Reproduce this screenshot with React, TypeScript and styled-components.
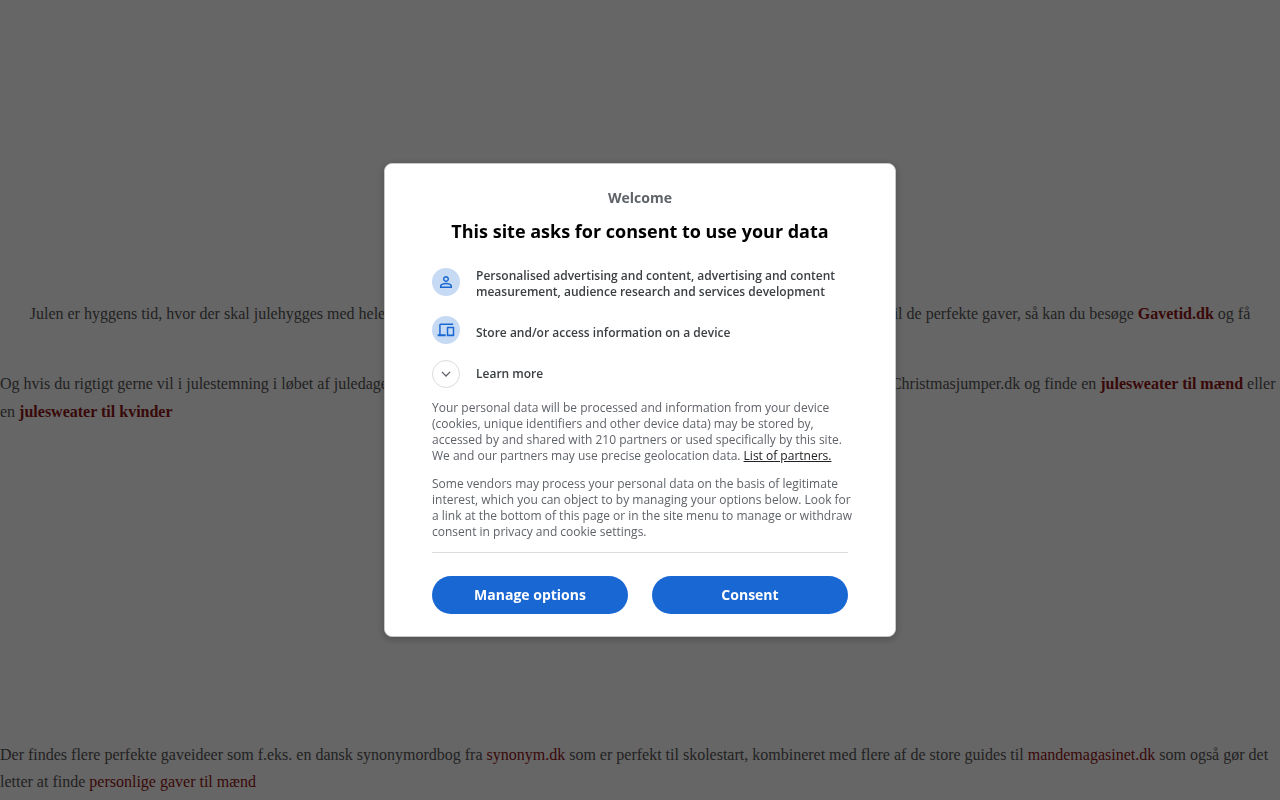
import React from "react";
import styled, { createGlobalStyle } from "styled-components";

const GlobalStyle = createGlobalStyle`
  *, *::before, *::after { box-sizing: border-box; }
  body {
    margin: 0;
    background: #fff;
    color: #555;
    font-family: "Liberation Serif", "Times New Roman", serif;
    font-size: 16px;
    overflow: hidden;
  }
`;

const Page = styled.main`
  padding-top: 300px;
`;

const Paragraph = styled.p<{ $center?: boolean; $leading?: number; $after?: number }>`
  margin: 0 0 ${(p) => p.$after ?? 0}px;
  line-height: ${(p) => p.$leading ?? 28}px;
  text-align: ${(p) => (p.$center ? "center" : "left")};
`;

const TextGap = styled.span<{ $width: number }>`
  display: inline-block;
  width: ${(p) => p.$width}px;
`;

const PageLink = styled.a<{ $bold?: boolean }>`
  color: #901414;
  font-weight: ${(p) => (p.$bold ? 700 : 400)};
  text-decoration: none;
`;

const Overlay = styled.div`
  position: fixed;
  inset: 0;
  display: flex;
  align-items: center;
  justify-content: center;
  background: rgba(0, 0, 0, 0.6);
`;

const Dialog = styled.section`
  width: 100%;
  max-width: 512px;
  padding: 24px 47px 22px;
  border: 1px solid #c8c8c8;
  border-radius: 8px;
  background: #fff;
  box-shadow: 0 2px 8px rgba(0, 0, 0, 0.25);
  color: #5f6368;
  font-family: "Open Sans", sans-serif;
  font-size: 12px;
  line-height: 16px;
`;

const Welcome = styled.p`
  margin: 0 0 12px;
  font-size: 14px;
  font-weight: 700;
  line-height: 20px;
  text-align: center;
`;

const Title = styled.h1`
  margin: 0 0 26px;
  color: #000;
  font-size: 18px;
  font-weight: 700;
  line-height: 22px;
  text-align: center;
`;

const Purposes = styled.ul`
  display: flex;
  flex-direction: column;
  gap: 16px;
  margin: 0 0 16px;
  padding: 0;
  list-style: none;
`;

const Purpose = styled.li`
  display: flex;
  gap: 16px;
  color: #3c4043;
  font-weight: 600;
`;

const PurposeText = styled.span<{ $single?: boolean }>`
  padding-top: ${(p) => (p.$single ? 9 : 0)}px;
`;

const IconDisc = styled.span<{ $outlined?: boolean }>`
  display: flex;
  flex: none;
  align-items: center;
  justify-content: center;
  width: 28px;
  height: 28px;
  border: ${(p) => (p.$outlined ? "1px solid #dadce0" : "0")};
  border-radius: 50%;
  background: ${(p) => (p.$outlined ? "#fff" : "#c6daf4")};
  color: ${(p) => (p.$outlined ? "#5f6368" : "#1967d2")};

  svg { flex: none; }
`;

const LearnMore = styled.button`
  display: flex;
  align-items: center;
  gap: 16px;
  width: 100%;
  margin: 0 0 12px;
  padding: 0;
  border: 0;
  background: none;
  color: #3c4043;
  font: inherit;
  font-weight: 600;
  text-align: left;
  cursor: pointer;
`;

const Notice = styled.p`
  margin: 0 -4px 12px 0;
`;

const PartnersLink = styled.a`
  color: #202124;
  text-decoration: underline;
`;

const Actions = styled.footer`
  display: flex;
  gap: 24px;
  padding-top: 23px;
  border-top: 1px solid #dadce0;
`;

const ActionButton = styled.button`
  flex: 1;
  height: 38px;
  padding: 0 16px;
  border: 0;
  border-radius: 19px;
  background: #1967d2;
  color: #fff;
  font-family: inherit;
  font-size: 14px;
  font-weight: 700;
  line-height: 20px;
  cursor: pointer;
`;

export default function App() {
  return (
    <>
      <GlobalStyle />
      <Page>
        <Paragraph $center $after={42}>
          Julen er hyggens tid, hvor der skal julehygges med hele
          <TextGap $width={504} />
          til de perfekte gaver, så kan du besøge{" "}
          <PageLink href="#gavetid" $bold>Gavetid.dk</PageLink> og få
        </Paragraph>
        <Paragraph $after={315}>
          Og hvis du rigtigt gerne vil i julestemning i løbet af juledage
          <TextGap $width={503} />
          Christmasjumper.dk og finde en{" "}
          <PageLink href="#maend" $bold>julesweater til mænd</PageLink> eller en{" "}
          <PageLink href="#kvinder" $bold>julesweater til kvinder</PageLink>
        </Paragraph>
        <Paragraph $leading={27}>
          Der findes flere perfekte gaveideer som f.eks. en dansk synonymordbog fra{" "}
          <PageLink href="#synonym">synonym.dk</PageLink> som er perfekt til skolestart,
          kombineret med flere af de store guides til{" "}
          <PageLink href="#mandemagasinet">mandemagasinet.dk</PageLink> som også gør det
          letter at finde <PageLink href="#gaver">personlige gaver til mænd</PageLink>
        </Paragraph>
      </Page>

      <Overlay>
        <Dialog role="dialog" aria-modal="true" aria-labelledby="consent-title">
          <Welcome>Welcome</Welcome>
          <Title id="consent-title">This site asks for consent to use your data</Title>
          <Purposes>
            <Purpose>
              <IconDisc>
                <svg width="18" height="18" viewBox="0 0 24 24" fill="currentColor" aria-hidden="true">
                  <path d="M12 5.9a2.1 2.1 0 1 1 0 4.2 2.1 2.1 0 0 1 0-4.2m0 9c2.97 0 6.1 1.46 6.1 2.1v1.1H5.9V17c0-.64 3.13-2.1 6.1-2.1M12 4C9.79 4 8 5.79 8 8s1.79 4 4 4 4-1.79 4-4-1.79-4-4-4m0 9c-2.67 0-8 1.34-8 4v3h16v-3c0-2.66-5.33-4-8-4" />
                </svg>
              </IconDisc>
              <PurposeText>
                Personalised advertising and content, advertising and content measurement,
                audience research and services development
              </PurposeText>
            </Purpose>
            <Purpose>
              <IconDisc>
                <svg width="20" height="20" viewBox="0 -960 960 960" fill="currentColor" aria-hidden="true">
                  <path d="M80-180v-96h72v-444q0-30 21-51t51-21h600v72H224v444h240v96H80Zm472 0q-15 0-25-11t-10-25v-384q0-15 10-25t25-11h288q15 0 25 11t11 25v384q0 15-11 25t-25 11H552Zm37-80h215v-300H589v300Z" />
                </svg>
              </IconDisc>
              <PurposeText $single>Store and/or access information on a device</PurposeText>
            </Purpose>
          </Purposes>
          <LearnMore type="button" aria-expanded="false">
            <IconDisc $outlined>
              <svg
                width="18"
                height="18"
                viewBox="0 0 18 18"
                fill="none"
                stroke="currentColor"
                strokeWidth="1.3"
                aria-hidden="true"
              >
                <path d="M4.900 6.900 9 11l4.100-4.100" />
              </svg>
            </IconDisc>
            Learn more
          </LearnMore>
          <Notice>
            Your personal data will be processed and information from your device (cookies,
            unique identifiers and other device data) may be stored by, accessed by and shared
            with 210 partners or used specifically by this site. We and our partners may use
            precise geolocation data. <PartnersLink href="#partners">List of partners.</PartnersLink>
          </Notice>
          <Notice>
            Some vendors may process your personal data on the basis of legitimate interest,
            which you can object to by managing your options below. Look for a link at the
            bottom of this page or in the site menu to manage or withdraw consent in privacy
            and cookie settings.
          </Notice>
          <Actions>
            <ActionButton type="button">Manage options</ActionButton>
            <ActionButton type="button">Consent</ActionButton>
          </Actions>
        </Dialog>
      </Overlay>
    </>
  );
}
